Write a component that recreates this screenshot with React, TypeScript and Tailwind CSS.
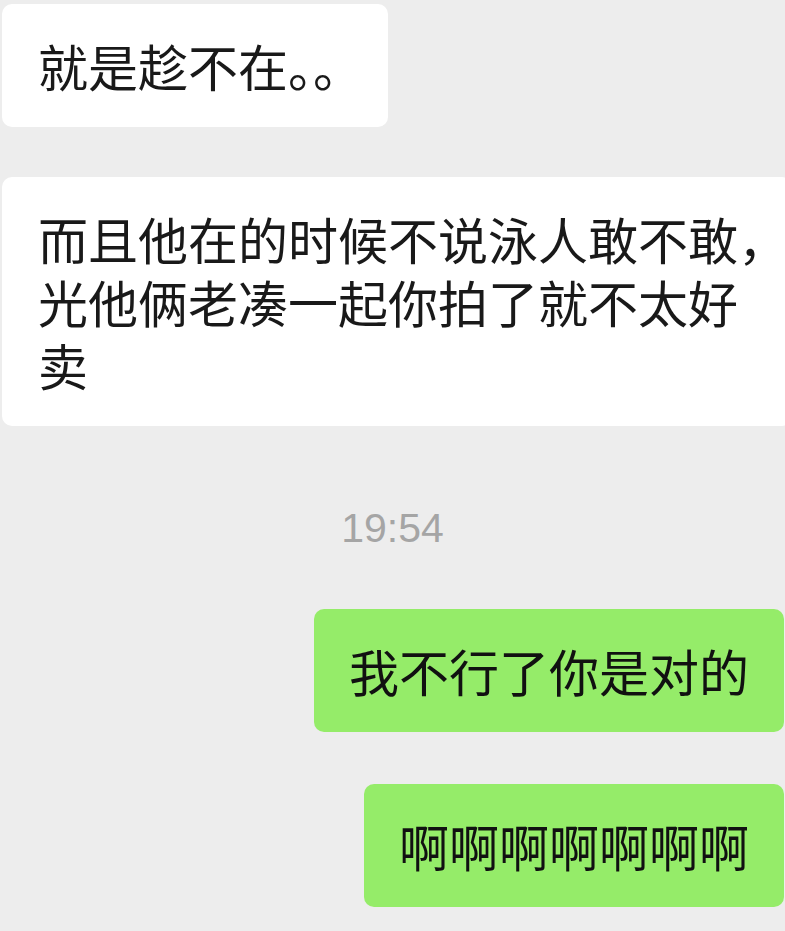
const cjk = "font-['Noto_Sans_CJK_SC','Noto_Sans',sans-serif]";

function LeftBubble({children, className = ''}: {children: React.ReactNode; className?: string}) {
  return (
    <div
      className={`self-start ml-[2px] rounded-[10px] bg-white pl-[36px] pr-[36px] py-[30px] text-[50px] leading-[63px] text-[#191919] whitespace-nowrap ${cjk} ${className}`}
    >
      {children}
    </div>
  );
}

function RightBubble({children, className = ''}: {children: React.ReactNode; className?: string}) {
  return (
    <div
      className={`self-end mr-[1px] rounded-[10px] bg-[#95ec69] px-[35px] py-[30px] text-[50px] leading-[63px] text-[#111111] whitespace-nowrap ${cjk} ${className}`}
    >
      {children}
    </div>
  );
}

export default function App() {
  return (
    <div className="w-full h-[931px] overflow-hidden bg-[#ededed] flex flex-col">
      <LeftBubble className="mt-[4px] w-[386px]">就是趁不在。。</LeftBubble>

      <LeftBubble className="mt-[50px] w-[790px]">
        而且他在的时候不说泳人敢不敢，
        <br />
        光他俩老凑一起你拍了就不太好
        <br />
        卖
      </LeftBubble>

      <div className="mt-[82px] mb-[61px] h-[40px] text-center text-[41px] leading-[40px] text-[#a5a5a5] font-['Liberation_Sans',Arial,sans-serif]">
        19:54
      </div>

      <RightBubble>我不行了你是对的</RightBubble>

      <RightBubble className="mt-[52px]">啊啊啊啊啊啊啊</RightBubble>
    </div>
  );
}
